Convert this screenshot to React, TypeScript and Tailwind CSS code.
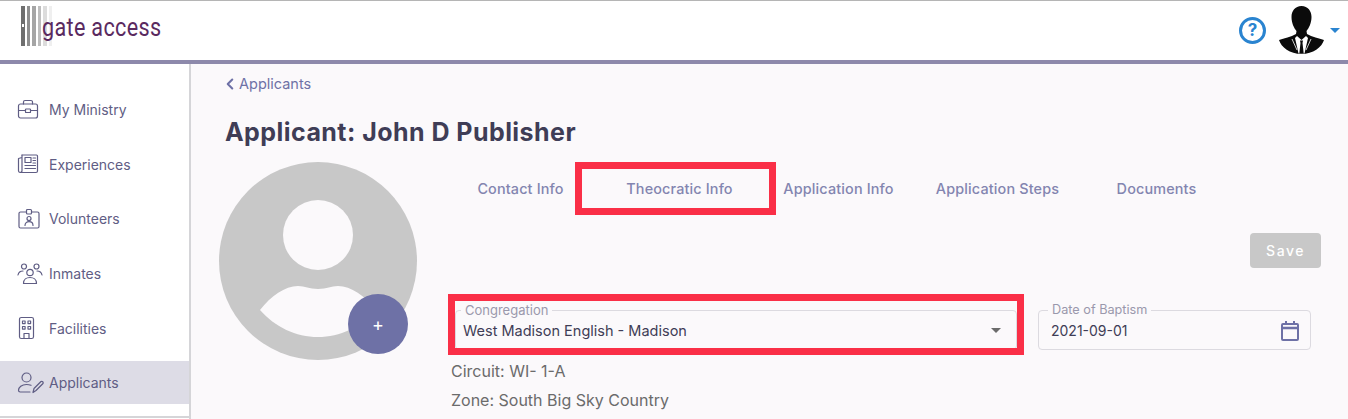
import { ChevronLeft } from "lucide-react";
import type { ReactNode } from "react";

const stroke = {
  fill: "none",
  stroke: "#5f5d84",
  strokeWidth: 1.2,
  strokeLinecap: "round" as const,
  strokeLinejoin: "round" as const,
};

function BriefcaseIcon() {
  return (
    <svg width="22" height="22" viewBox="0 0 22 22" {...stroke}>
      <rect x="1.5" y="5" width="19" height="14" rx="2" />
      <path d="M6.500 5V3a1.500 1.500 0 0 1 1.500-1.500h6A1.500 1.500 0 0 1 15.500 3v2" />
      <path d="M1.500 11.500h7M13.500 11.500h7" />
      <rect x="8.500" y="10" width="5" height="3.500" rx="0.6" />
    </svg>
  );
}

function NewsIcon() {
  return (
    <svg width="22" height="22" viewBox="0 0 22 22" {...stroke}>
      <path d="M5 2h14.500a1 1 0 0 1 1 1v15a1.500 1.500 0 0 1-1.500 1.500H4" />
      <path d="M5 2v15.500a2 2 0 0 1-2 2 1.700 1.700 0 0 1-1.500-1.700V5.500L5 4.500" />
      <rect x="8" y="4.500" width="6" height="5" />
      <path d="M16 5h2.500M16 7.500h2.500M16 10h2.500M8 12.500h10.500M8 15.500h10.500" />
    </svg>
  );
}

function BadgeIcon() {
  return (
    <svg width="24" height="22" viewBox="0 0 24 22" {...stroke}>
      <path d="M9 4H3.500a1.500 1.500 0 0 0-1.500 1.500v13A1.500 1.500 0 0 0 3.500 20h17a1.500 1.500 0 0 0 1.500-1.500v-13A1.500 1.500 0 0 0 20.500 4H15" />
      <rect x="9.500" y="1.500" width="5" height="4.500" rx="1" />
      <circle cx="12" cy="10.500" r="2" />
      <path d="M8 17.500c0-2.500 1.800-3.800 4-3.800s4 1.300 4 3.800" />
    </svg>
  );
}

function PeopleIcon() {
  return (
    <svg width="26" height="22" viewBox="0 0 26 22" {...stroke}>
      <circle cx="7" cy="3.500" r="2.500" />
      <circle cx="19.500" cy="3.500" r="2.500" />
      <circle cx="13" cy="9.500" r="3.200" />
      <path d="M1 12c.5-2.500 2.500-4 5-4M25 12c-.5-2.500-2.500-4-5-4" />
      <path d="M6.500 20.500c0-3.800 3-6 6.500-6s6.500 2.200 6.500 6z" />
    </svg>
  );
}

function BuildingIcon() {
  return (
    <svg width="20" height="24" viewBox="0 0 20 24" {...stroke}>
      <rect x="2.500" y="1.500" width="14" height="21" rx="1.800" />
      <rect x="5.500" y="5" width="2.600" height="2.600" />
      <rect x="11" y="5" width="2.600" height="2.600" />
      <rect x="5.500" y="10.500" width="2.600" height="2.600" />
      <rect x="11" y="10.500" width="2.600" height="2.600" />
      <path d="M7 22.500v-5h5v5" />
    </svg>
  );
}

function ApplicantIcon() {
  return (
    <svg width="27" height="22" viewBox="0 0 27 22" {...stroke}>
      <circle cx="9.500" cy="5.500" r="4.500" />
      <path d="M14 13.300c-1.300-.5-2.800-.8-4.500-.8-4.700 0-8 2.600-8 5.800 0 1 .6 1.700 1.700 1.700H13" />
      <path d="M16 20.500l1-4 7-7a1.500 1.500 0 0 1 2 2l-7 7z" />
    </svg>
  );
}

function NavItem({ icon, label, active }: { icon: ReactNode; label: string; active?: boolean }) {
  return (
    <div className={`mb-[11.700px] flex h-[43px] items-center ${active ? "bg-[#dddce6]" : ""}`}>
      <div className="flex w-[49px] shrink-0 justify-start pl-[17px]">{icon}</div>
      <span className="text-[14px] text-[#5f5d84]">{label}</span>
    </div>
  );
}

function GateLogo() {
  return (
    <div className="relative -mt-[10px] flex h-[40px] gap-[2px]">
      <div className="w-[4px] bg-[#6f6f6f]" />
      <div className="w-[3px] bg-[#8f8f8f]" />
      <div className="w-[4px] bg-[#a5a5a5]" />
      <div className="w-[3px] bg-[#bdbdbd]" />
      <div className="w-[4px] bg-[#dcdcdc]" />
      <div className="w-[3px] bg-[#efefef]" />
      <div className="absolute left-[1px] top-[18px] h-[3px] w-[2px] bg-white" />
    </div>
  );
}

function UserSilhouette() {
  return (
    <svg width="45" height="48" viewBox="0 0 45 48" className="-mt-[2px]">
      <path
        d="M22.500 0C29 0 32.500 5 32.500 11C32.500 17 30 22 27.500 25L28 28C33 31 40 32 45 34C43 41 34 48 22.500 48C11 48 2 41 0 34C5 32 12 31 17 28L17.500 25C15 22 12.500 17 12.500 11C12.500 5 16 0 22.500 0Z"
        fill="#0b0b0b"
      />
      <path d="M18 30L22.500 34L27 30L29 32L25.500 47.500H19.500L16 32Z" fill="#fff" />
      <path d="M21 34.500h3l-.5 2.500 1.200 10.500h-4.400L21.500 37z" fill="#0b0b0b" />
      <path d="M13 33l5 11M32 33l-5 11" stroke="#fff" strokeWidth="0.8" fill="none" />
    </svg>
  );
}

const tabs = ["Contact Info", "Theocratic Info", "Application Info", "Application Steps", "Documents"];

export default function App() {
  return (
    <div className="flex h-[419px] w-[1348px] flex-col overflow-hidden bg-[#fbf9fb] font-['Inter',sans-serif] text-[#3f3d56]">
      <header className="flex h-[64px] shrink-0 items-center justify-between border-t border-b-[4px] border-t-[#b5b5b5] border-b-[#8d89ab] bg-white pl-[21px] pr-[8px]">
        <div className="flex items-center">
          <GateLogo />
          <span className="-mt-[7px] -ml-[10px] origin-left scale-x-[0.83] font-['Roboto',sans-serif] text-[26px] leading-[32px] tracking-[0.4px] text-[#5a2a5f]">gate access</span>
        </div>
        <div className="flex items-center">
          <div className="mr-[13px] flex h-[27px] w-[27px] items-center justify-center rounded-full border-[3px] border-[#2a84d0] text-[17px] font-bold text-[#2a84d0]">?</div>
          <UserSilhouette />
          <div className="ml-[6px] h-0 w-0 border-x-[5px] border-t-[5px] border-x-transparent border-t-[#2a84d0]" />
        </div>
      </header>
      <div className="flex min-h-0 flex-1">
        <aside className="w-[191px] shrink-0 border-r-2 border-[#d5d5d8] bg-white pt-[24px]">
          <NavItem icon={<BriefcaseIcon />} label="My Ministry" />
          <NavItem icon={<NewsIcon />} label="Experiences" />
          <NavItem icon={<BadgeIcon />} label="Volunteers" />
          <NavItem icon={<PeopleIcon />} label="Inmates" />
          <NavItem icon={<BuildingIcon />} label="Facilities" />
          <NavItem icon={<ApplicantIcon />} label="Applicants" active />
          <div className="border-t-2 border-[#d5d5d8]" />
        </aside>
        <main className="min-w-0 flex-1 pl-[34px]">
          <div className="mt-[10px] flex h-[20px] items-center gap-[1px] text-[14.500px] text-[#6e71a6]">
            <ChevronLeft size={18} strokeWidth={2.800} className="-ml-[4px] -mr-[1px]" />
            <span>Applicants</span>
          </div>
          <h1 className="mt-[22px] text-[25px] font-bold leading-[32px] tracking-[0.45px] text-[#3f3d56]">Applicant: John D Publisher</h1>
          <div className="mt-[14px] flex">
            <div className="relative -ml-[6px] h-[198px] w-[198px] shrink-0">
              <svg width="198" height="198" viewBox="0 0 198 198">
                <circle cx="99" cy="99" r="99" fill="#c8c8c8" />
                <circle cx="99" cy="73" r="35" fill="#fbf9fb" />
                <path
                  d="M41 148C52 134 66 124 79 124C86 124 90 127 99 127C108 127 112 124 119 124C132 124 146 134 157 148C142 165 121 175 99 175C77 175 56 165 41 148Z"
                  fill="#fbf9fb"
                />
              </svg>
              <div className="absolute left-[129px] top-[132px] flex h-[60px] w-[60px] items-center justify-center rounded-full bg-[#6e71a6] text-[18px] text-white">+</div>
            </div>
            <div className="ml-[24px] w-[880px]">
              <div className="flex h-[53px] items-center">
                {tabs.map((tab) => (
                  <div key={tab} className="relative flex h-full w-[159px] items-center justify-center text-[14.400px] tracking-[0.15px] font-medium text-[#8385b0]">
                    {tab}
                    {tab === "Theocratic Info" && (
                      <div className="absolute -left-[25px] top-0 h-[53px] w-[201px] border-[7px] border-[#fa2f47]" />
                    )}
                  </div>
                ))}
              </div>
              <div className="mt-[18px] flex justify-end">
                <div className="flex h-[35px] w-[71px] items-center justify-center rounded-[4px] bg-[#c8c8c8] text-[14px] font-medium tracking-[1.500px] text-white">Save</div>
              </div>
              <div className="mt-[42px] flex">
                <div className="relative ml-[14px] h-[40px] w-[562px] shrink-0 rounded-[4px] border border-[#dcdae0]">
                  <span className="absolute -top-[8px] left-[5px] bg-[#fbf9fb] px-[4px] text-[13px] leading-[14px] text-[#9a98ac]">Congregation</span>
                  <div className="flex h-full items-center justify-between pl-[7px] pr-[15px] pt-[1px] text-[14.500px] text-[#3f3d56]">
                    <span>West Madison English - Madison</span>
                    <div className="h-0 w-0 border-x-[5px] border-t-[5px] border-x-transparent border-t-[#6b6b6b]" />
                  </div>
                  <div className="absolute -left-[8px] -top-[17px] h-[61px] w-[576px] border-[7px] border-[#fa2f47]" />
                </div>
                <div className="relative ml-[21px] h-[40px] w-[273px] shrink-0 rounded-[4px] border border-[#dcdae0]">
                  <span className="absolute -top-[8px] left-[9px] bg-[#fbf9fb] px-[4px] text-[12.700px] leading-[14px] text-[#9a98ac]">Date of Baptism</span>
                  <div className="flex h-full items-center justify-between pl-[12px] pr-[11px] pt-[1px] text-[14px] text-[#3f3d56]">
                    <span>2021-09-01</span>
                    <svg width="18" height="20" viewBox="0 0 18 20" fill="none" stroke="#6e71a6" strokeWidth="2">
                      <rect x="1" y="3" width="16" height="16" rx="1" />
                      <path d="M1 7h16" strokeWidth="2.500" />
                      <path d="M5 0v4M13 0v4" />
                    </svg>
                  </div>
                </div>
              </div>
              <p className="ml-[10px] mt-[11px] text-[16px] leading-[20px] text-[#6b6b6b]">Circuit: WI- 1-A</p>
              <p className="ml-[10px] mt-[9px] text-[16px] leading-[20px] text-[#6b6b6b]">Zone: South Big Sky Country</p>
            </div>
          </div>
        </main>
      </div>
    </div>
  );
}
